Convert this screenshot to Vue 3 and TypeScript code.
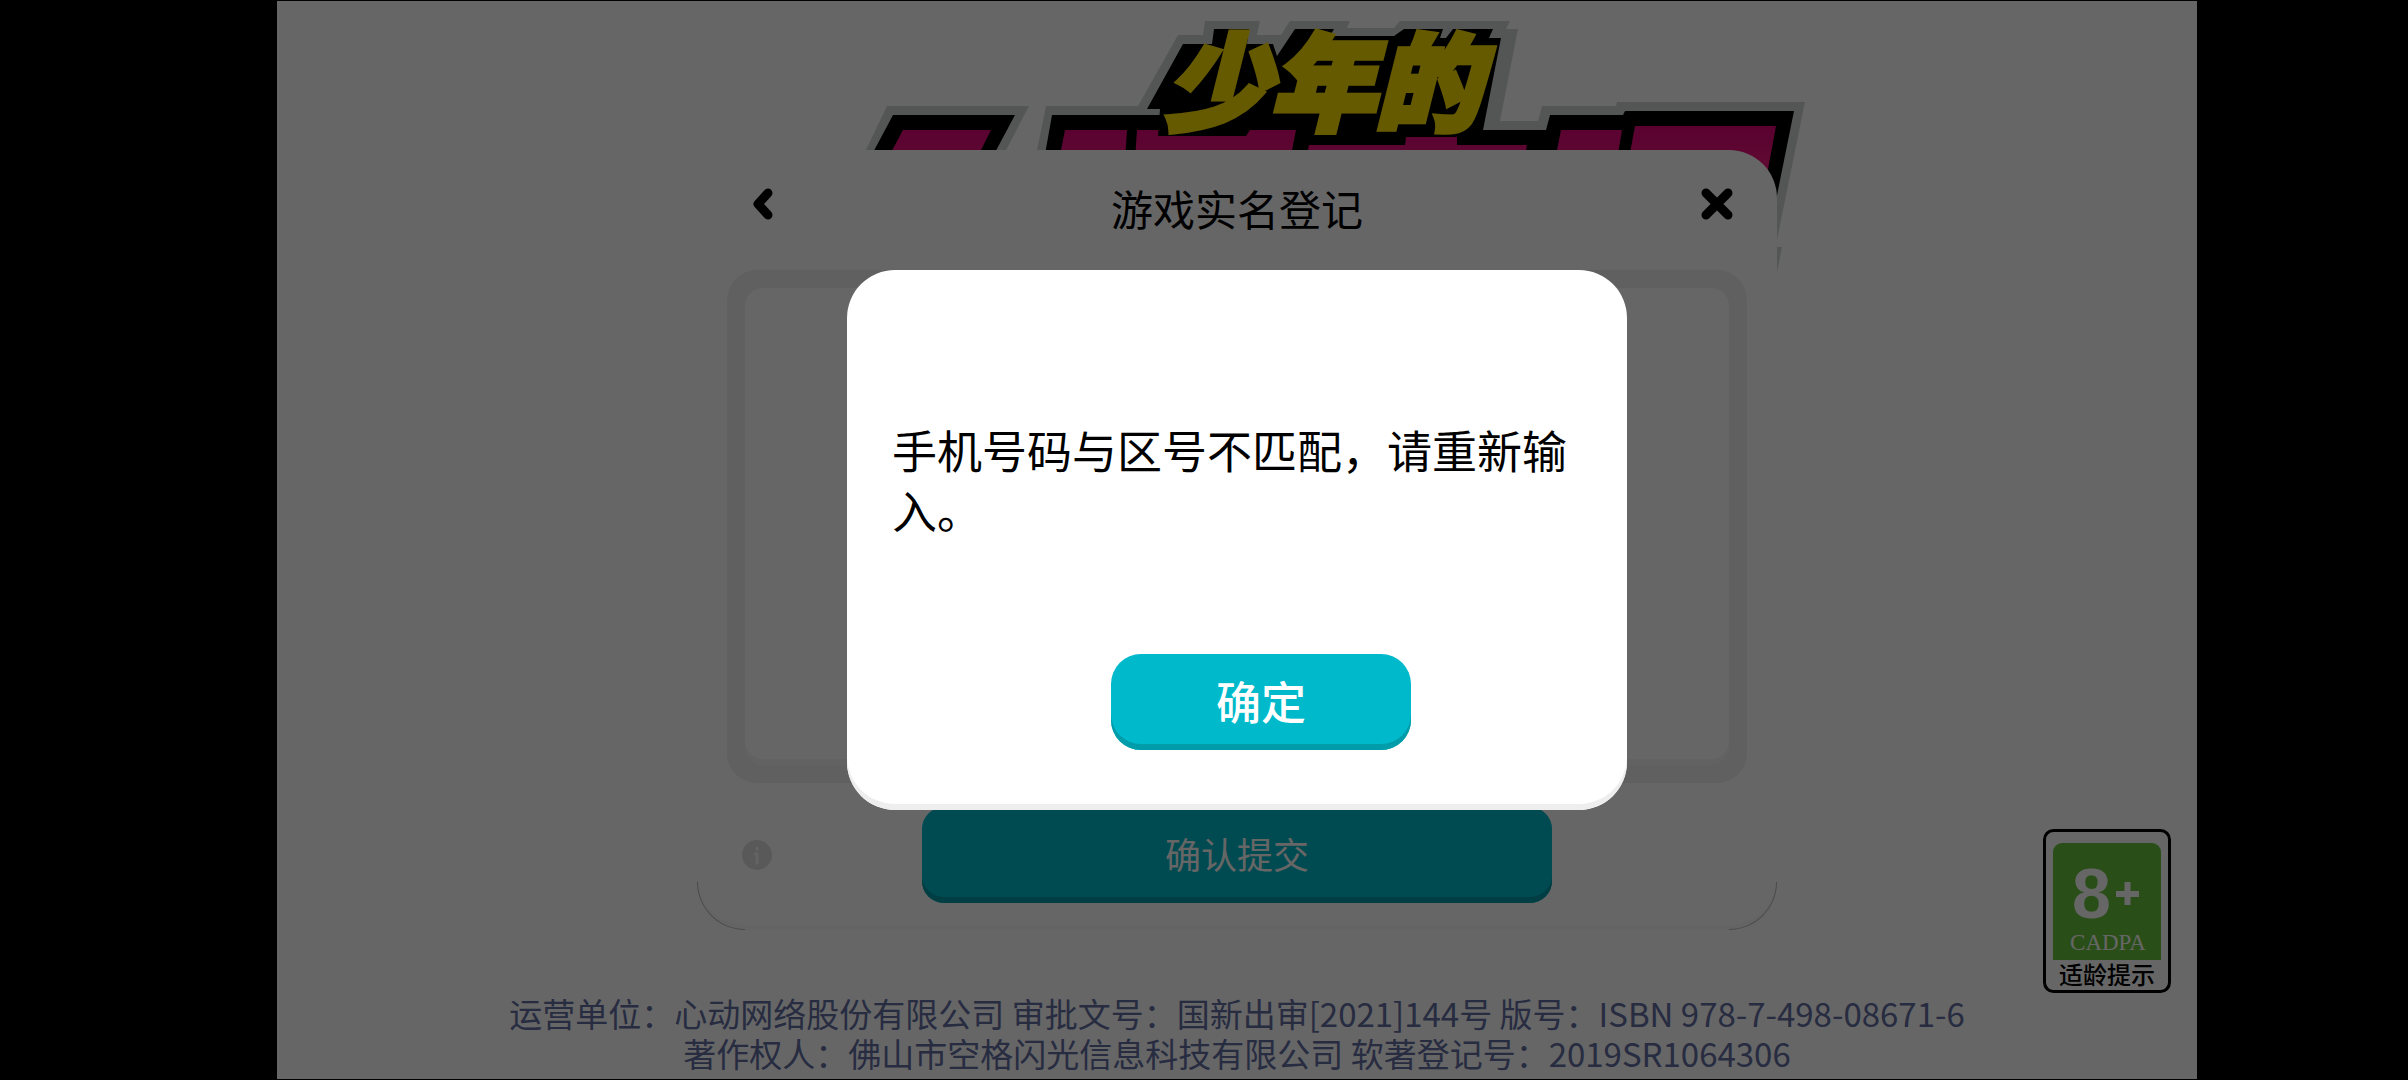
<script setup lang="ts">
import { ref } from 'vue'

const alertOpen = ref(true)
const message = '手机号码与区号不匹配，请重新输入。'
const legalLines: string[] = [
  '运营单位：心动网络股份有限公司 审批文号：国新出审[2021]144号 版号：ISBN 978-7-498-08671-6',
  '著作权人：佛山市空格闪光信息科技有限公司 软著登记号：2019SR1064306',
]
</script>

<template>
  <div class="screen">
    <main class="stage">
      <svg class="logo" viewBox="637 1 1200 279" role="img" aria-label="少年的">
        <defs>
          <linearGradient id="pink" x1="0" y1="120" x2="0" y2="170" gradientUnits="userSpaceOnUse">
            <stop offset="0" stop-color="#df0078" />
            <stop offset="1" stop-color="#f01c80" />
          </linearGradient>
        </defs>
        <g fill="#d3d6d8">
          <polygon points="887,106 1029,106 1001,160 861,160" />
          <polygon points="1046,106 1138,106 1178,35 1203,35 1205,21 1260,21 1257,35 1281,35 1290,21 1350,21 1347,28 1394,28 1400,21 1510,21 1506,29 1518,29 1500,121 1538,121 1542,106 1616,106 1617,102 1805,102 1777,240 1700,240 1700,160 1035,160" />
          <polygon points="1770,247 1782,247 1777,272 1770,272" />
        </g>
        <polygon points="893,115 1015,115 991,160 869,160" />
        <polygon points="1052,115 1160,115 1160,130 1546,130 1550,115 1623,115 1625,111 1794,111 1770,230 1700,230 1700,160 1044,160" />
        <g fill="url(#pink)">
          <polygon points="903,130 991,130 976,160 887,160" />
          <polygon points="1065,130 1127,130 1125,160 1059,160" />
          <polygon points="1137,130 1296,130 1290,160 1135,160" />
          <polygon points="1309,145 1405,145 1406,137 1457,137 1457,145 1527,145 1524,160 1306,160" />
          <polygon points="1561,130 1622,130 1617,160 1555,160" />
          <polygon points="1635,126 1776,126 1766,180 1625,180" />
        </g>
        <polygon points="1147,109 1183,44 1212,44 1214,29 1249,29 1247,44 1273,44 1277,56 1295,29 1334,29 1330,36 1394,36 1404,29 1443,29 1440,38 1446,38 1453,29 1493,29 1489,38 1501,38 1483,130 1250,130 1246,136 1158,136 1160,109" />
        <text class="logo-text" x="1165" y="122">少年的</text>
      </svg>

      <section class="panel" aria-labelledby="panel-title">
        <header class="panel-head">
          <button class="icon-button" type="button" aria-label="返回">
            <svg width="32" height="32" viewBox="0 0 32 32"><path d="M27 5 17 16 27 27" /></svg>
          </button>
          <h1 id="panel-title">游戏实名登记</h1>
          <button class="icon-button close" type="button" aria-label="关闭">
            <svg width="32" height="32" viewBox="0 0 32 32"><path d="M5 5 27 27M27 5 5 27" /></svg>
          </button>
        </header>
        <div class="frame"><div class="frame-body"></div></div>
        <div class="panel-foot">
          <svg class="info" width="30" height="30" viewBox="0 0 30 30" aria-hidden="true">
            <circle cx="15" cy="15" r="15" fill="#dfdfdf" />
            <path d="M15 8v1M13 14h2v9" fill="none" stroke="#f8f8f8" stroke-width="3" stroke-linecap="round" />
          </svg>
          <button class="primary submit" type="button">确认提交</button>
        </div>
      </section>

      <svg class="rating" width="128" height="164" viewBox="0 0 128 164" role="img" aria-label="8+ CADPA 适龄提示">
        <rect x="1.5" y="1.5" width="125" height="161" rx="9" fill="#fff" stroke="#000" stroke-width="3" />
        <path d="M10 131V23a9 9 0 0 1 9-9h90a9 9 0 0 1 9 9v108z" fill="#66c43a" />
        <text class="rating-number" x="29" y="89">8</text>
        <path d="M73 65h23M84.500 53v23" fill="none" stroke="#fff" stroke-width="6" />
        <text class="rating-org" x="65" y="121" text-anchor="middle">CADPA</text>
        <text class="rating-label" x="64" y="155" text-anchor="middle">适龄提示</text>
      </svg>

      <footer class="legal">
        <p v-for="line in legalLines" :key="line">{{ line }}</p>
      </footer>

      <div v-if="alertOpen" class="shade">
        <div class="alert" role="alertdialog" aria-modal="true" aria-describedby="alert-message">
          <p id="alert-message">{{ message }}</p>
          <button class="primary confirm" type="button" @click="alertOpen = false">确定</button>
        </div>
      </div>
    </main>
  </div>
</template>

<style>
body {
  margin: 0;
  background: #000;
}
</style>

<style scoped>
.screen {
  box-sizing: border-box;
  display: flex;
  justify-content: center;
  min-height: 100vh;
  padding: 1px 0 1px 66px;
  background: #000;
  font-family: "Noto Sans CJK SC", "Noto Sans", sans-serif;
}

.stage {
  display: grid;
  width: min(100%, 178vh);
  max-width: 1920px;
  background: #fff;
  overflow: hidden;
}

.stage > * {
  grid-area: 1 / 1;
}

.logo {
  place-self: start center;
  width: 1200px;
  max-width: 100%;
}

.logo-text {
  font-size: 105px;
  font-weight: 900;
  font-style: italic;
  fill: #ffe100;
  stroke: #ffe100;
  stroke-width: 6px;
  stroke-linejoin: miter;
}

.panel {
  position: relative;
  place-self: center;
  box-sizing: border-box;
  width: 1080px;
  max-width: 100%;
  padding-bottom: 27px;
  border-radius: 48px;
  background: #fff;
  box-shadow: inset 0 -5px #fafafa;
}

.panel::before,
.panel::after {
  content: "";
  position: absolute;
  bottom: 0;
  box-sizing: border-box;
  width: 48px;
  height: 48px;
  border-bottom: 1px solid #bbb;
}

.panel::before {
  left: 0;
  border-left: 1px solid #bbb;
  border-bottom-left-radius: 48px;
}

.panel::after {
  right: 0;
  border-right: 1px solid #bbb;
  border-bottom-right-radius: 48px;
}

.panel-head {
  box-sizing: border-box;
  display: grid;
  grid-template-columns: 1fr auto 1fr;
  align-items: center;
  height: 120px;
  padding: 0 44px 4px;
}

.panel-head h1 {
  margin: 0;
  font-size: 42px;
  line-height: 60px;
  font-weight: 400;
}

.icon-button {
  justify-self: start;
  height: 32px;
  margin: 0 0 8px;
  padding: 0;
  border: 0;
  background: none;
}

.icon-button.close {
  justify-self: end;
}

.icon-button svg {
  display: block;
  fill: none;
  stroke: #000;
  stroke-width: 9px;
  stroke-linecap: round;
  stroke-linejoin: round;
}

.frame {
  box-sizing: border-box;
  height: 513px;
  margin: 0 30px;
  padding: 18px 18px 24px;
  border-radius: 30px;
  background: #f0f0f0;
}

.frame-body {
  height: 100%;
  border-radius: 18px;
  background: #fff;
  box-shadow: 0 6px #f5f5f5;
}

.panel-foot {
  display: grid;
  grid-template-columns: 1fr auto 1fr;
  align-items: center;
  padding: 24px 45px 0;
}

.primary {
  height: 96px;
  padding: 0 0 4px;
  border: 0;
  background: #00b9ca;
  box-shadow: inset 0 -6px #009ca9;
  color: #fff;
  font-family: inherit;
  font-weight: 400;
}

.submit {
  width: 630px;
  border-radius: 22px;
  font-size: 36px;
}

.rating {
  place-self: end;
  margin: 0 26px 86px 0;
}

.rating-number {
  font: 700 70px "Liberation Sans", sans-serif;
  fill: #fff;
}

.rating-org {
  font: 23px "Liberation Serif", serif;
  fill: #fff;
}

.rating-label {
  font-size: 24px;
  font-weight: 500;
}

.legal {
  place-self: end center;
  padding-bottom: 6px;
  color: #626ea4;
  font-size: 33px;
  line-height: 40px;
  text-align: center;
}

.legal p {
  margin: 0;
}

.shade {
  z-index: 1;
  display: grid;
  place-items: center;
  background: rgba(0, 0, 0, 0.6);
}

.alert {
  box-sizing: border-box;
  display: flex;
  flex-direction: column;
  width: 780px;
  max-width: 100%;
  min-height: 540px;
  padding: 150px 45px 60px;
  border-radius: 48px;
  background: #fff;
  box-shadow: inset 0 -6px #eee;
}

.alert p {
  margin: 0;
  font-size: 45px;
  line-height: 60px;
}

.confirm {
  align-self: center;
  width: 300px;
  margin: auto 0 0 48px;
  border-radius: 30px;
  font-size: 45px;
  font-weight: 500;
}
</style>
